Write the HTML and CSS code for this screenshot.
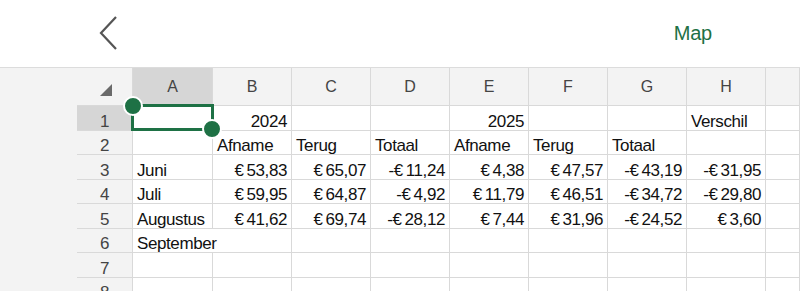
FILE: index.html
```html
<!DOCTYPE html>
<html lang="nl">
<head>
  <meta charset="UTF-8">
  <meta name="viewport" content="width=device-width, initial-scale=1.0">
  <title>Map</title>
  <link rel="stylesheet" href="styles.css">
</head>
<body>
  <div class="topbar">
    <svg class="back" width="22" height="36" viewBox="0 0 22 36">
      <path d="M18 2 L3 18 L18 34" fill="none" stroke="#555" stroke-width="2.2"/>
    </svg>
    <span class="map">Map</span>
  </div>

  <div class="sheet">
    <div class="corner"><span class="tri"></span></div>
    <div class="col sel">A</div>
    <div class="col">B</div>
    <div class="col">C</div>
    <div class="col">D</div>
    <div class="col">E</div>
    <div class="col">F</div>
    <div class="col">G</div>
    <div class="col">H</div>
    <div class="col"></div>

    <div class="row sel">1</div>
    <div class="cell active">
      <div class="selection">
        <span class="handle tl"></span>
        <span class="handle br"></span>
      </div>
    </div>
    <div class="cell num">2024</div>
    <div class="cell"></div>
    <div class="cell"></div>
    <div class="cell num">2025</div>
    <div class="cell"></div>
    <div class="cell"></div>
    <div class="cell">Verschil</div>
    <div class="cell"></div>

    <div class="row">2</div>
    <div class="cell"></div>
    <div class="cell">Afname</div>
    <div class="cell">Terug</div>
    <div class="cell">Totaal</div>
    <div class="cell">Afname</div>
    <div class="cell">Terug</div>
    <div class="cell">Totaal</div>
    <div class="cell"></div>
    <div class="cell"></div>

    <div class="row">3</div>
    <div class="cell">Juni</div>
    <div class="cell num">€&thinsp;53,83</div>
    <div class="cell num">€&thinsp;65,07</div>
    <div class="cell num">-€&thinsp;11,24</div>
    <div class="cell num">€&thinsp;4,38</div>
    <div class="cell num">€&thinsp;47,57</div>
    <div class="cell num">-€&thinsp;43,19</div>
    <div class="cell num">-€&thinsp;31,95</div>
    <div class="cell"></div>

    <div class="row">4</div>
    <div class="cell">Juli</div>
    <div class="cell num">€&thinsp;59,95</div>
    <div class="cell num">€&thinsp;64,87</div>
    <div class="cell num">-€&thinsp;4,92</div>
    <div class="cell num">€&thinsp;11,79</div>
    <div class="cell num">€&thinsp;46,51</div>
    <div class="cell num">-€&thinsp;34,72</div>
    <div class="cell num">-€&thinsp;29,80</div>
    <div class="cell"></div>

    <div class="row">5</div>
    <div class="cell">Augustus</div>
    <div class="cell num">€&thinsp;41,62</div>
    <div class="cell num">€&thinsp;69,74</div>
    <div class="cell num">-€&thinsp;28,12</div>
    <div class="cell num">€&thinsp;7,44</div>
    <div class="cell num">€&thinsp;31,96</div>
    <div class="cell num">-€&thinsp;24,52</div>
    <div class="cell num">€&thinsp;3,60</div>
    <div class="cell"></div>

    <div class="row">6</div>
    <div class="cell overflow">September</div>
    <div class="cell"></div>
    <div class="cell"></div>
    <div class="cell"></div>
    <div class="cell"></div>
    <div class="cell"></div>
    <div class="cell"></div>
    <div class="cell"></div>
    <div class="cell"></div>

    <div class="row">7</div>
    <div class="cell"></div>
    <div class="cell"></div>
    <div class="cell"></div>
    <div class="cell"></div>
    <div class="cell"></div>
    <div class="cell"></div>
    <div class="cell"></div>
    <div class="cell"></div>
    <div class="cell"></div>

    <div class="row">8</div>
    <div class="cell"></div>
    <div class="cell"></div>
    <div class="cell"></div>
    <div class="cell"></div>
    <div class="cell"></div>
    <div class="cell"></div>
    <div class="cell"></div>
    <div class="cell"></div>
    <div class="cell"></div>
  </div>
</body>
</html>
```

FILE: styles.css
```css
html, body {
  margin: 0;
  height: 100%;
  overflow: hidden;
  background: #f3f3f3;
  font-family: "Liberation Sans", Arial, sans-serif;
}
.topbar {
  height: 68px;
  background: white;
  display: flex;
  align-items: center;
  justify-content: space-between;
  padding: 0 88px 0 98px;
  border-bottom: 1px solid #dcdcdc;
  box-sizing: border-box;
}
.back {
  display: block;
  margin-top: -2px;
}
.map {
  color: #1e7145;
  font-size: 20px;
  letter-spacing: -0.2px;
  margin-top: -1px;
}
.sheet {
  display: grid;
  grid-template-columns: 56px 80px repeat(7, 79px) 1fr;
  grid-template-rows: 38px repeat(8, 24.5px);
  padding-left: 77px;
}
.sheet > div {
  box-sizing: border-box;
  border-right: 1px solid #d9d9d9;
  border-bottom: 1px solid #d9d9d9;
  font-size: 17px;
  line-height: 15px;
  letter-spacing: -0.4px;
  white-space: nowrap;
}
.corner {
  position: relative;
}
.tri {
  position: absolute;
  left: 23px;
  top: 16px;
  width: 0;
  height: 0;
  border-left: 12px solid transparent;
  border-bottom: 12px solid #6a6a6a;
}
.col, .row {
  color: #444;
  display: flex;
  justify-content: center;
}
.sheet > .col {
  align-items: center;
  font-size: 16px;
  line-height: normal;
  letter-spacing: 0;
  padding-top: 1px;
}
.row {
  align-items: flex-end;
  padding-bottom: 1px;
}
.sel {
  background: #d6d6d6;
}
.cell {
  background: white;
  color: #111;
  display: flex;
  align-items: flex-end;
  padding: 0 4px 1px;
}
.num {
  justify-content: flex-end;
}
.overflow {
  overflow: visible;
  position: relative;
  z-index: 1;
}
.sheet > .overflow {
  border-right: none;
}
.active {
  position: relative;
  z-index: 2;
}
.selection {
  position: absolute;
  left: -2px;
  top: -2px;
  right: -2px;
  bottom: -1px;
  border: 3px solid #1e7145;
}
.handle {
  position: absolute;
  width: 16px;
  height: 16px;
  border-radius: 50%;
  background: #1e7145;
  border: 2px solid white;
}
.handle.tl {
  left: -11px;
  top: -11px;
}
.handle.br {
  right: -11px;
  bottom: -11px;
}
```
